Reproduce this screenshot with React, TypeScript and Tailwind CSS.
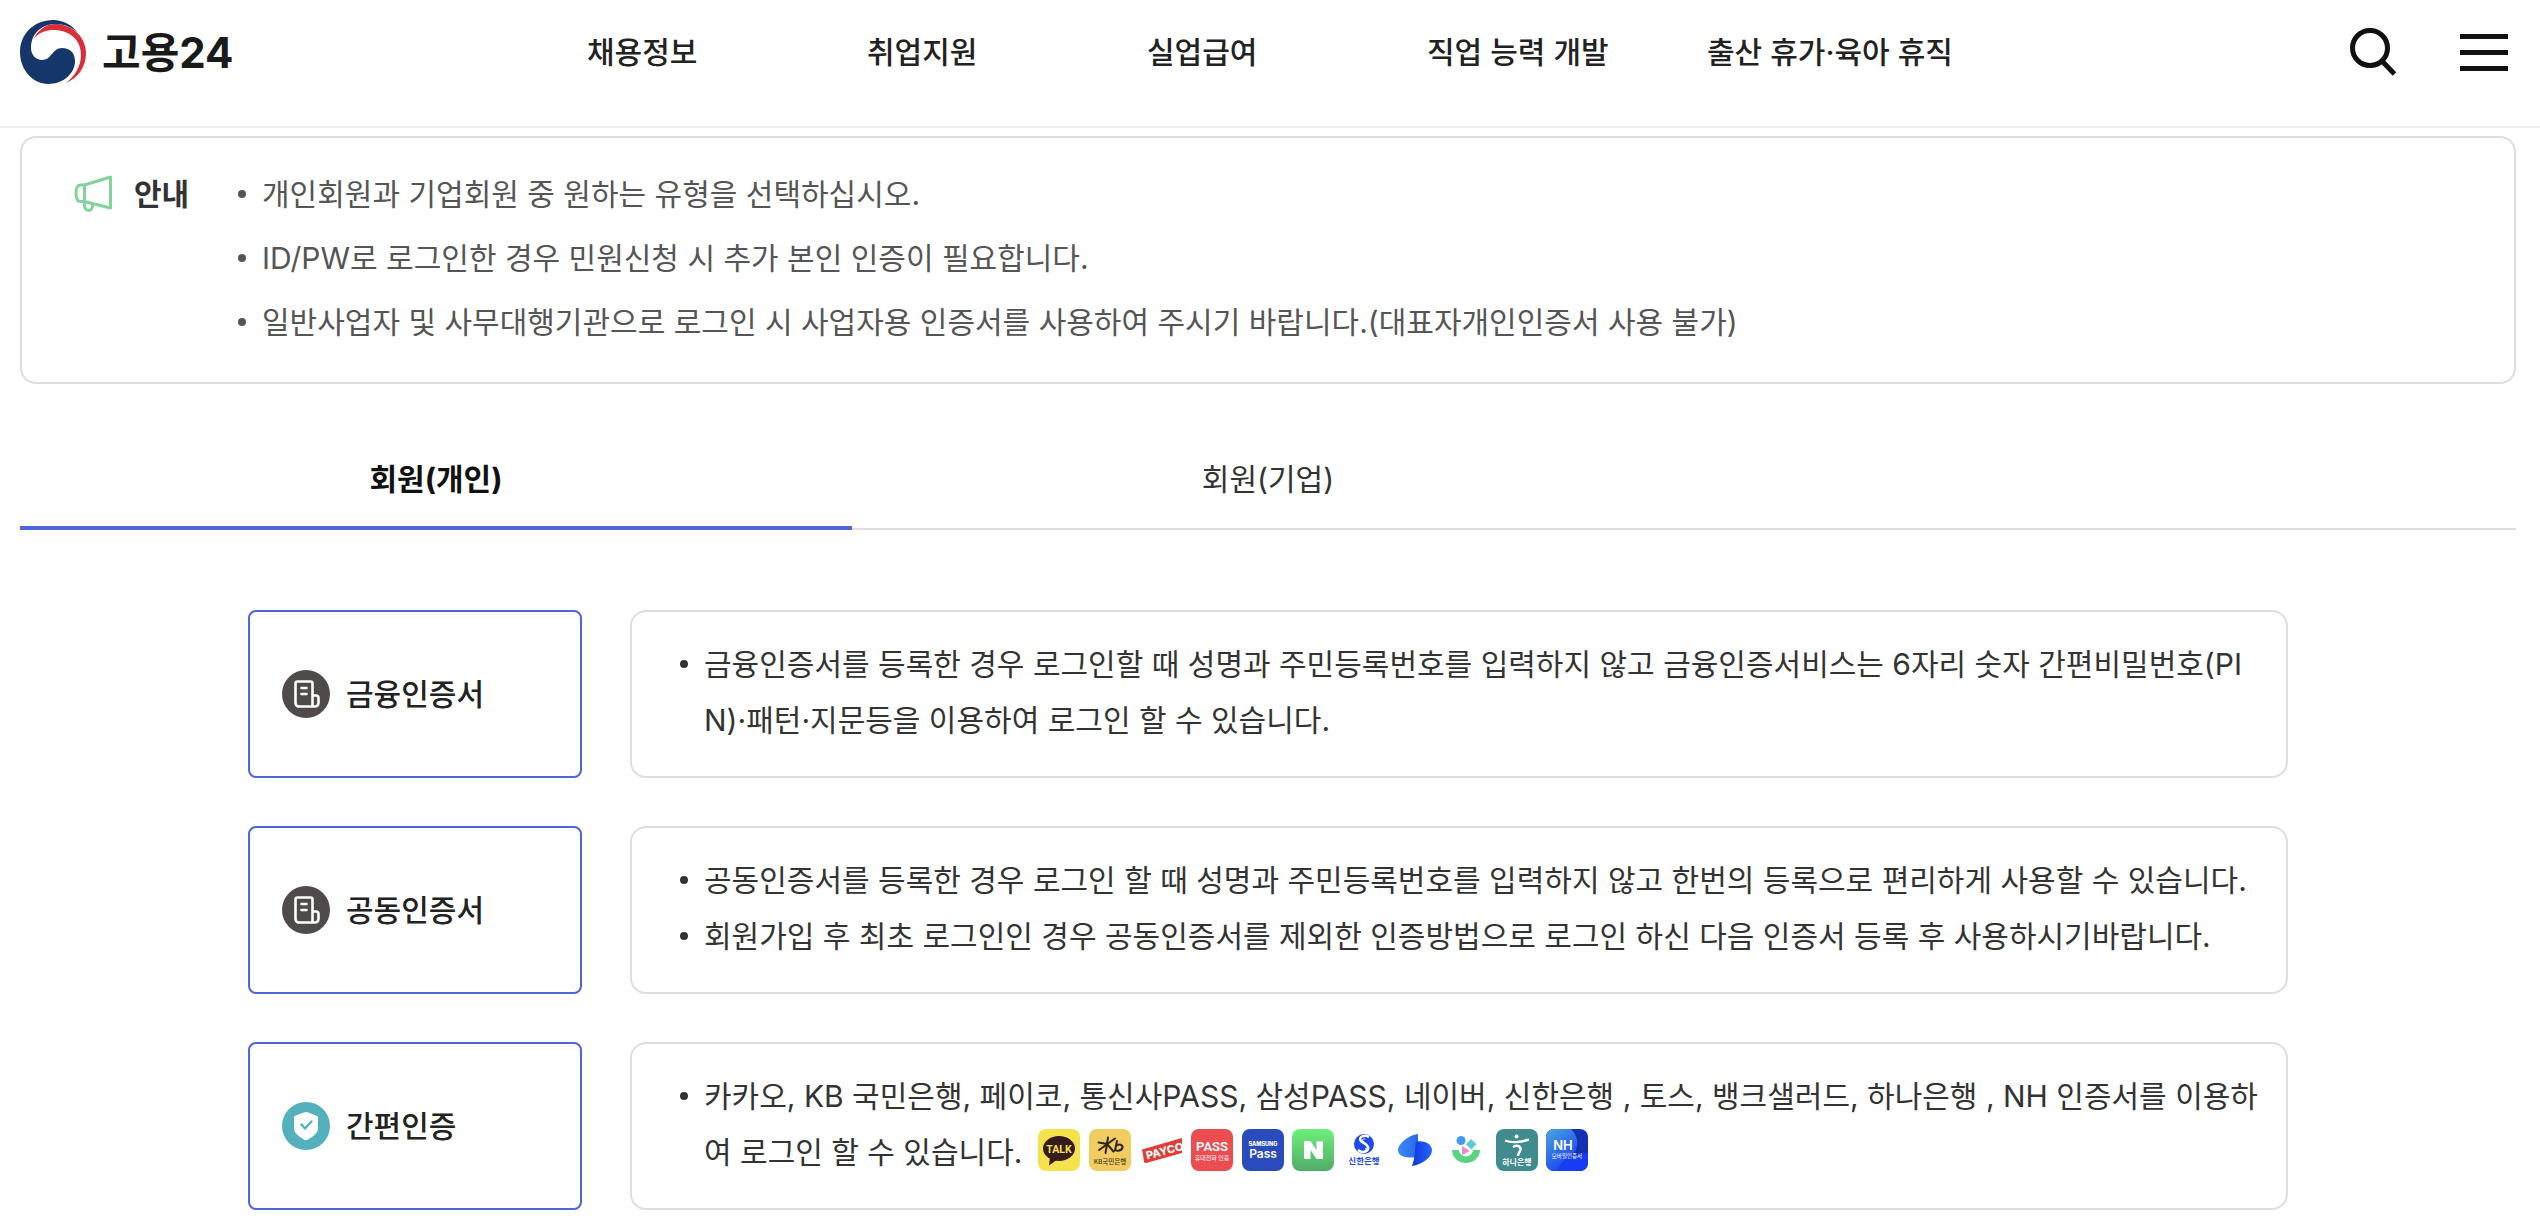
import type { ReactNode } from "react";

const NAV = ["채용정보", "취업지원", "실업급여", "직업 능력 개발", "출산 휴가·육아 휴직"];

const NOTICES = [
  "개인회원과 기업회원 중 원하는 유형을 선택하십시오.",
  "ID/PW로 로그인한 경우 민원신청 시 추가 본인 인증이 필요합니다.",
  "일반사업자 및 사무대행기관으로 로그인 시 사업자용 인증서를 사용하여 주시기 바랍니다.(대표자개인인증서 사용 불가)",
];

function GovLogo() {
  return (
    <svg viewBox="0 0 66 64" className="h-16 w-[66px]" aria-hidden="true">
      <path d="M33 0C14 0 0 14 0 32s13 32 28 32c16 0 27-11 27-23 0-8-5-13-13-13-10 0-10 12-20 12-6 0-11-5-11-12C11 14 21 4 36 4c9 0 17 4 22 9C52 5 43 0 33 0Z" fill="#15366a" />
      <path d="M12 22C18 8 28 3 38 4c16 2 28 14 28 29 0 14-8 25-20 30 9-7 15-17 15-28 0-15-11-25-28-25-10 0-18 5-21 12Z" fill="#d92f3a" />
    </svg>
  );
}

function MegaphoneIcon() {
  return (
    <svg viewBox="0 0 38 38" className="size-[38px]" fill="none" stroke="#82d29c" strokeWidth="3" strokeLinejoin="round" aria-hidden="true">
      <path d="M10.500 10 36.500 2v31l-26-6.500Z" />
      <path d="M10.500 10H6.500C3 10 2 13 2 18s1 8.500 4.500 8.500h4" />
      <path d="M10.500 27v3c0 7 8 7 8 1v-2" />
    </svg>
  );
}

function CertIcon() {
  return (
    <svg viewBox="0 0 48 48" className="size-12 shrink-0" aria-hidden="true">
      <circle cx="24" cy="24" r="24" fill="#4f4b4a" />
      <g fill="none" stroke="#fff" strokeWidth="2.600" strokeLinecap="round" strokeLinejoin="round">
        <path d="M30.500 36V13.500a2 2 0 0 0-2-2H15.500a2 2 0 0 0-2 2V33a3.500 3.500 0 0 0 3.500 3.500h16a3.500 3.500 0 0 0 3.500-3.500v-5a2.500 2.500 0 0 0-2.500-2.500h-3" />
        <path d="M19.500 18h5M19.500 24h5" />
      </g>
    </svg>
  );
}

function ShieldIcon() {
  return (
    <svg viewBox="0 0 48 48" className="size-12 shrink-0" aria-hidden="true">
      <circle cx="24" cy="24" r="24" fill="#54b0bb" />
      <path d="M24 10c2 0 9 3 11 4 1 .500 1 1 1 2v10c0 6-6 9-10 11.500-1.500.900-2.500.900-4 0C18 35 12 32 12 26V16c0-1 0-1.500 1-2 2-1 9-4 11-4Z" fill="#fff" />
      <path d="m19.500 22.500 3.500 4 6.500-7" fill="none" stroke="#54b0bb" strokeWidth="2.400" strokeLinecap="round" strokeLinejoin="round" />
    </svg>
  );
}

function Badge({ label, children }: { label: string; children: ReactNode }) {
  return (
    <svg viewBox="0 0 42 42" className="size-[42px]" role="img" aria-label={label} textAnchor="middle" fontFamily="'Noto Sans CJK KR', sans-serif">
      {children}
    </svg>
  );
}

function ProviderBadges() {
  return (
    <span className="ml-4 inline-flex h-14 w-[550px] items-center justify-between pb-1 align-top">
      <Badge label="카카오">
        <rect width="42" height="42" rx="8" fill="#f5e24d" />
        <ellipse cx="21" cy="19.500" rx="16" ry="12.500" fill="#371c1c" />
        <path d="M12 28 11 36.500 20 30Z" fill="#371c1c" />
        <text x="21" y="23.500" fontSize="10.500" fontWeight="700" fill="#f5e24d" fontFamily="Roboto, sans-serif">TALK</text>
      </Badge>
      <Badge label="KB 국민은행">
        <rect width="42" height="42" rx="8" fill="#f1cc60" />
        <path d="M19 8.500 16.500 24M9.500 13.500l9 1.500M26 9.500 10 21M18 15l6.500 7.500M28 12l-2 9.500M27 17c3-3 7-1 6.500 1.500-.500 3-6 4.500-7 2" fill="none" stroke="#2e2518" strokeWidth="2" strokeLinecap="round" />
        <text x="21" y="34.500" fontSize="6.500" fontWeight="500" fill="#43371d">KB국민은행</text>
      </Badge>
      <Badge label="페이코">
        <path d="M2 20.500 42 9v15L6 34c-1 .200-1.500 0-1.800-1Z" fill="#e33c35" />
        <text x="25" y="26" fontSize="11" fontWeight="800" fill="#fff" fontFamily="Inter, sans-serif" transform="rotate(-15 24 23)">PAYCO</text>
      </Badge>
      <Badge label="통신사 PASS">
        <rect width="42" height="42" rx="8" fill="#ec4d51" />
        <text x="21" y="21.500" fontSize="13" fontWeight="600" fill="#fff" fontFamily="Roboto, sans-serif">PASS</text>
        <text x="21" y="31" fontSize="6" fill="#fff">휴대전화 인증</text>
      </Badge>
      <Badge label="삼성 PASS">
        <rect width="42" height="42" rx="8" fill="#294bbd" />
        <text x="21" y="16.500" fontSize="5.500" fontWeight="800" fill="#fff" fontFamily="Inter, sans-serif">SAMSUNG</text>
        <text x="21" y="28.500" fontSize="12" fontWeight="600" fill="#fff" fontFamily="Inter, sans-serif">Pass</text>
      </Badge>
      <Badge label="네이버">
        <defs>
          <linearGradient id="naver" x1="0" y1="0" x2="0" y2="1">
            <stop stopColor="#6df07a" />
            <stop offset="1" stopColor="#50ac68" />
          </linearGradient>
        </defs>
        <rect width="42" height="42" rx="8" fill="url(#naver)" />
        <path d="M12 12h6.500l6 9v-9H31v18h-6.500l-6-9v9H12Z" fill="#fff" />
      </Badge>
      <Badge label="신한은행">
        <circle cx="21" cy="15" r="10" fill="#1d4af0" />
        <path d="M26 8c-6-3-11 1-8 4 2 2 6 3 7 6 1 4-5 7-10 3" fill="none" stroke="#fff" strokeWidth="2.500" />
        <path d="M22 10c-4 0-3 2 0 4s4 5 0 6" fill="none" stroke="#fff" strokeWidth="1" />
        <text x="21" y="34.500" fontSize="8.500" fontWeight="700" fill="#1d4af0">신한은행</text>
      </Badge>
      <Badge label="토스">
        <defs>
          <linearGradient id="tossBack">
            <stop stopColor="#3d8bff" />
            <stop offset="1" stopColor="#2a66e8" />
          </linearGradient>
          <linearGradient id="tossFront">
            <stop stopColor="#0d36d8" />
            <stop offset="1" stopColor="#2565ff" />
          </linearGradient>
        </defs>
        <path d="M24 5v23C17 29 5 29 4 22 3 15 15 6 24 5Z" fill="url(#tossBack)" />
        <path d="M22 12.500c8-1 16 2 16 9 0 6-9 14-20 15.500 3-8 3-16 4-24.500Z" fill="url(#tossFront)" />
      </Badge>
      <Badge label="뱅크샐러드">
        <circle cx="16" cy="11.500" r="4.500" fill="#4299f5" />
        <rect x="22.500" y="11.500" width="7.500" height="7.500" fill="#5ccdcd" transform="rotate(45 26.200 15.200)" />
        <path d="m17 17 8 5-8 4Z" fill="#e88bc9" />
        <path d="M7 21a14 13 0 0 0 28 0h-7a7 6.500 0 0 1-14 0Z" fill="#5dd184" />
      </Badge>
      <Badge label="하나은행">
        <rect width="42" height="42" rx="8" fill="#3f8b8d" />
        <circle cx="20.500" cy="7.500" r="2" fill="#fff" />
        <path d="M9 11.500c8 3 15 2 24-1M17 18c5-3 9 0 7 4-1 2-2 3-2 5" fill="none" stroke="#fff" strokeWidth="2.400" />
        <text x="21" y="35.500" fontSize="8" fontWeight="700" fill="#fff">하나은행</text>
      </Badge>
      <Badge label="NH 모바일인증서">
        <defs>
          <linearGradient id="nhGlow" x1="0" y1="0" x2=".6" y2="1">
            <stop stopColor="#4aa8e0" />
            <stop offset="1" stopColor="#1a3df0" />
          </linearGradient>
        </defs>
        <rect width="42" height="42" rx="8" fill="#1330b0" />
        <path d="M8 0h17c7 7 8 15 4 23-7 4-14 10-17 19H8a8 8 0 0 1-8-8V8a8 8 0 0 1 8-8Z" fill="url(#nhGlow)" />
        <path d="M42 24v10a8 8 0 0 1-8 8H12c3-12 14-18 30-18Z" fill="#163df5" />
        <text x="17" y="20.500" fontSize="13" fontWeight="600" fill="#fff" fontFamily="Inter, sans-serif">NH</text>
        <text x="21" y="29" fontSize="5.500" fill="#fff">모바일인증서</text>
      </Badge>
    </span>
  );
}

const METHODS = [
  {
    name: "금융인증서",
    icon: <CertIcon />,
    notes: [
      "금융인증서를 등록한 경우 로그인할 때 성명과 주민등록번호를 입력하지 않고 금융인증서비스는 6자리 숫자 간편비밀번호(PIN)·패턴·지문등을 이용하여 로그인 할 수 있습니다.",
    ],
  },
  {
    name: "공동인증서",
    icon: <CertIcon />,
    notes: [
      "공동인증서를 등록한 경우 로그인 할 때 성명과 주민등록번호를 입력하지 않고 한번의 등록으로 편리하게 사용할 수 있습니다.",
      "회원가입 후 최초 로그인인 경우 공동인증서를 제외한 인증방법으로 로그인 하신 다음 인증서 등록 후 사용하시기바랍니다.",
    ],
  },
  {
    name: "간편인증",
    icon: <ShieldIcon />,
    notes: [
      "카카오, KB 국민은행, 페이코, 통신사PASS, 삼성PASS, 네이버, 신한은행 , 토스, 뱅크샐러드, 하나은행 , NH 인증서를 이용하여 로그인 할 수 있습니다.",
    ],
    badges: true,
  },
];

function Header() {
  return (
    <header className="flex h-32 items-start border-b-2 border-[#eee] pt-5 pr-8 pl-5">
      <a href="#" className="flex h-16 w-[567px] shrink-0 items-center gap-4 text-[42px] font-bold text-[#1a1a1a]">
        <GovLogo />
        고용24
      </a>
      <nav className="flex h-16 grow items-center text-[30px] font-medium text-[#222]">
        {NAV.map((item) => (
          <a key={item} href="#" className="w-[280px] shrink-0 whitespace-nowrap">
            {item}
          </a>
        ))}
      </nav>
      <div className="flex h-16 items-center gap-16">
        <button type="button" aria-label="검색">
          <svg viewBox="0 0 46 48" className="h-12 w-[46px]" fill="none" stroke="#111" strokeWidth="5">
            <circle cx="20" cy="20" r="17.500" />
            <path d="m31.500 32.500 13 13.500" />
          </svg>
        </button>
        <button type="button" aria-label="전체메뉴" className="flex flex-col gap-[11px]">
          <span className="h-[5px] w-12 bg-[#111]" />
          <span className="h-[5px] w-12 bg-[#111]" />
          <span className="h-[5px] w-12 bg-[#111]" />
        </button>
      </div>
    </header>
  );
}

export default function App() {
  return (
    <div className="bg-white pb-5 font-[Inter,'Noto_Sans_CJK_KR',sans-serif] text-[#333]">
      <Header />
      <main className="pt-2 pr-6 pl-5">
        <section className="flex items-start rounded-2xl border-2 border-[#ddd] pt-6 pb-7 pl-[52px]">
          <div className="flex h-16 w-[164px] items-center gap-[22px] text-[30px] font-bold">
            <MegaphoneIcon />
            <h2>안내</h2>
          </div>
          <ul className="text-[30px] leading-[64px] text-[#555]">
            {NOTICES.map((text) => (
              <li key={text} className="flex items-center gap-4">
                <span className="size-2 shrink-0 rounded-full bg-[#555]" />
                {text}
              </li>
            ))}
          </ul>
        </section>

        <div role="tablist" className="mt-12 grid h-[98px] grid-cols-3 border-b-2 border-[#ddd] text-[30px]">
          <button type="button" role="tab" aria-selected="true" className="-mb-0.5 border-b-4 border-[#5064db] font-bold text-[#111]">
            회원(개인)
          </button>
          <button type="button" role="tab" aria-selected="false" className="-mb-0.5 border-b-4 border-transparent">
            회원(기업)
          </button>
        </div>

        <div className="mx-auto mt-20 flex max-w-[2040px] flex-col gap-12">
          {METHODS.map((method) => (
            <div key={method.name} className="flex gap-12">
              <button
                type="button"
                className="flex w-[334px] shrink-0 items-center gap-4 rounded-lg border-2 border-[#5064db] px-8 text-[30px] font-medium text-[#222]"
              >
                {method.icon}
                {method.name}
              </button>
              <ul className="min-h-[168px] grow rounded-2xl border-2 border-[#ddd] pt-6 pr-6 pl-12 text-[30px] leading-[56px]">
                {method.notes.map((note) => (
                  <li key={note} className="flex items-start gap-4">
                    <span className="flex h-14 items-center">
                      <span className="size-2 rounded-full bg-[#333]" />
                    </span>
                    <span className="break-all">
                      {note}
                      {method.badges && <ProviderBadges />}
                    </span>
                  </li>
                ))}
              </ul>
            </div>
          ))}
        </div>
      </main>
    </div>
  );
}
